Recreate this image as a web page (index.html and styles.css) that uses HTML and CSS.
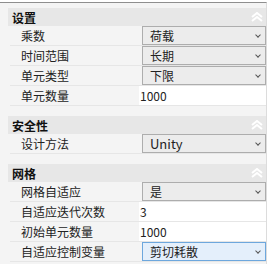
FILE: index.html
```html
<!DOCTYPE html>
<html lang="zh-CN">
<head>
    <meta charset="UTF-8">
    <title>属性</title>
    <link rel="stylesheet" href="styles.css">
</head>
<body>
    <div class="panel">
        <div class="section">
            <div class="sec-head">
                <span>设置</span>
                <svg class="collapse" width="12" height="10" viewBox="0 0 12 10"><path d="M1 5 L6 1 L11 5 M1 9 L6 5 L11 9" fill="none" stroke="#fff" stroke-width="2"/></svg>
            </div>
            <div class="row">
                <div class="label">乘数</div>
                <div class="value"><div class="select"><span>荷载</span><i class="arrow"></i></div></div>
            </div>
            <div class="row">
                <div class="label">时间范围</div>
                <div class="value"><div class="select"><span>长期</span><i class="arrow"></i></div></div>
            </div>
            <div class="row">
                <div class="label">单元类型</div>
                <div class="value"><div class="select"><span>下限</span><i class="arrow"></i></div></div>
            </div>
            <div class="row">
                <div class="label">单元数量</div>
                <div class="value text">1000</div>
            </div>
        </div>

        <div class="section">
            <div class="sec-head">
                <span>安全性</span>
                <svg class="collapse" width="12" height="10" viewBox="0 0 12 10"><path d="M1 5 L6 1 L11 5 M1 9 L6 5 L11 9" fill="none" stroke="#fff" stroke-width="2"/></svg>
            </div>
            <div class="row">
                <div class="label">设计方法</div>
                <div class="value"><div class="select latin"><span>Unity</span><i class="arrow"></i></div></div>
            </div>
        </div>

        <div class="section">
            <div class="sec-head">
                <span>网格</span>
                <svg class="collapse" width="12" height="10" viewBox="0 0 12 10"><path d="M1 5 L6 1 L11 5 M1 9 L6 5 L11 9" fill="none" stroke="#fff" stroke-width="2"/></svg>
            </div>
            <div class="row">
                <div class="label">网格自适应</div>
                <div class="value"><div class="select"><span>是</span><i class="arrow"></i></div></div>
            </div>
            <div class="row">
                <div class="label">自适应迭代次数</div>
                <div class="value text">3</div>
            </div>
            <div class="row">
                <div class="label">初始单元数量</div>
                <div class="value text">1000</div>
            </div>
            <div class="row">
                <div class="label">自适应控制变量</div>
                <div class="value"><div class="select active"><span>剪切耗散</span><i class="arrow"></i></div></div>
            </div>
        </div>
    </div>
</body>
</html>
```
FILE: styles.css
```css
body {
    margin: 0;
    background: #fff;
    font-family: "Noto Sans CJK SC", "Noto Sans", sans-serif;
    font-size: 12px;
    color: #222;
}
.panel {
    margin-top: 2px;
    border-top: 1px solid #8e8e8e;
    width: 267px;
    height: 262px;
    border-right: 1px solid #dcdcdc;
    background: #f4f4f4;
    padding-top: 5px;
    box-sizing: border-box;
}
.section {
    margin-bottom: 10px;
}
.sec-head {
    height: 18px;
    margin-left: 8px;
    padding-left: 4px;
    background: #e7e7e7;
    display: flex;
    align-items: center;
    justify-content: space-between;
    font-weight: bold;
    color: #111;
}
.collapse {
    margin-right: 3px;
}
.row {
    display: flex;
    height: 20px;
    margin-left: 10px;
    border-bottom: 1px solid #e6e6e6;
    box-sizing: border-box;
}
.label {
    width: 129px;
    padding-left: 11px;
    line-height: 19px;
    box-sizing: border-box;
}
.value {
    flex: 1;
    padding-left: 3px;
    display: flex;
    align-items: center;
}
.value.text {
    background: #fff;
    padding-left: 1px;
    line-height: 19px;
}
.select {
    flex: 1;
    height: 19px;
    border: 1px solid #adadad;
    background: #ececec;
    box-sizing: border-box;
    display: flex;
    align-items: center;
    justify-content: space-between;
    padding: 0 5px 0 7px;
}
.select.latin {
    font-size: 13px;
}
.select.active {
    background: #e4effb;
    border-color: #6da7dd;
}
.arrow {
    width: 3px;
    height: 3px;
    border-right: 1px solid #555;
    border-bottom: 1px solid #555;
    transform: rotate(45deg);
    margin-top: -2px;
}
```
